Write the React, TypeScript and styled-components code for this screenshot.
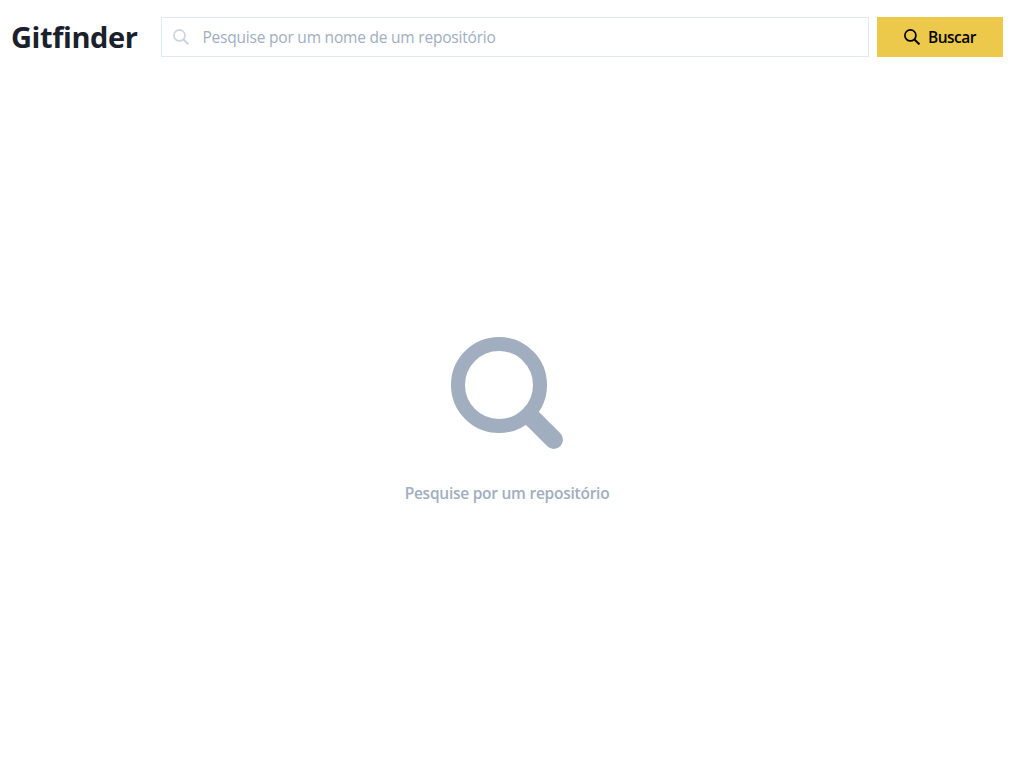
import React from 'react';
import styled, { createGlobalStyle } from 'styled-components';

const GlobalStyle = createGlobalStyle`
  * { box-sizing: border-box; }
  body {
    margin: 0;
    background: #fff;
    font-family: 'Segoe UI', 'Open Sans', 'Noto Sans', sans-serif;
    font-size: 16px;
    line-height: 24px;
  }
`;

const Page = styled.div`
  display: flex;
  flex-direction: column;
  height: 764px;
`;

const Header = styled.header`
  display: flex;
  align-items: center;
  height: 73px;
  padding: 1px 12px 0 11px;
`;

const Title = styled.h1`
  width: 150px;
  margin: 0;
  color: #1a202c;
  font-size: 29px;
  font-weight: 700;
  line-height: 40px;
  letter-spacing: -0.42px;
  white-space: nowrap;
`;

const SearchForm = styled.form`
  display: flex;
  flex: 1;
  gap: 8px;
`;

const Field = styled.label`
  display: flex;
  flex: 1;
  align-items: center;
  gap: 13.5px;
  height: 40px;
  padding: 0 11px;
  border: 1px solid #e2e8f0;
  color: #cbd5e0;
`;

const Input = styled.input`
  flex: 1;
  min-width: 0;
  padding: 0;
  border: 0;
  outline: 0;
  background: transparent;
  color: #1a202c;
  font: inherit;
  font-size: 15.5px;
  letter-spacing: -0.21px;
  &::placeholder { color: #a0aec0; opacity: 1; }
`;

const Button = styled.button`
  display: flex;
  align-items: center;
  justify-content: center;
  gap: 8px;
  width: 126px;
  height: 40px;
  padding: 0;
  border: 0;
  background: #ecc94b;
  color: #000;
  font: inherit;
  font-size: 15.5px;
  font-weight: 600;
  letter-spacing: -0.5px;
`;

const EmptyState = styled.main`
  display: flex;
  flex: 1;
  flex-direction: column;
  align-items: center;
  padding: 264px 1px 0 0;
  color: #a0aec0;
`;

const Message = styled.p`
  margin: 32px 0 0;
  font-size: 15.5px;
  font-weight: 600;
  letter-spacing: -0.25px;
`;

const SmallSearch = () => (
  <svg width="16" height="16" viewBox="0 0 16 16" fill="none" stroke="currentColor">
    <circle cx="6.4" cy="6.4" r="5.5" strokeWidth="1.7" />
    <path d="M10.2 10.2L15.4 15.4" strokeWidth="2" />
  </svg>
);

const LargeSearch = () => (
  <svg width="112" height="112" viewBox="0 0 112 112" fill="none" stroke="currentColor">
    <circle cx="48" cy="48" r="41" strokeWidth="14" />
    <path d="M80 80L102.8 102.8" strokeWidth="18.4" strokeLinecap="round" />
  </svg>
);

export default function App() {
  return (
    <Page>
      <GlobalStyle />
      <Header>
        <Title>Gitfinder</Title>
        <SearchForm onSubmit={(e: React.FormEvent) => e.preventDefault()}>
          <Field>
            <SmallSearch />
            <Input placeholder="Pesquise por um nome de um repositório" />
          </Field>
          <Button type="submit">
            <SmallSearch />
            Buscar
          </Button>
        </SearchForm>
      </Header>
      <EmptyState>
        <LargeSearch />
        <Message>Pesquise por um repositório</Message>
      </EmptyState>
    </Page>
  );
}
